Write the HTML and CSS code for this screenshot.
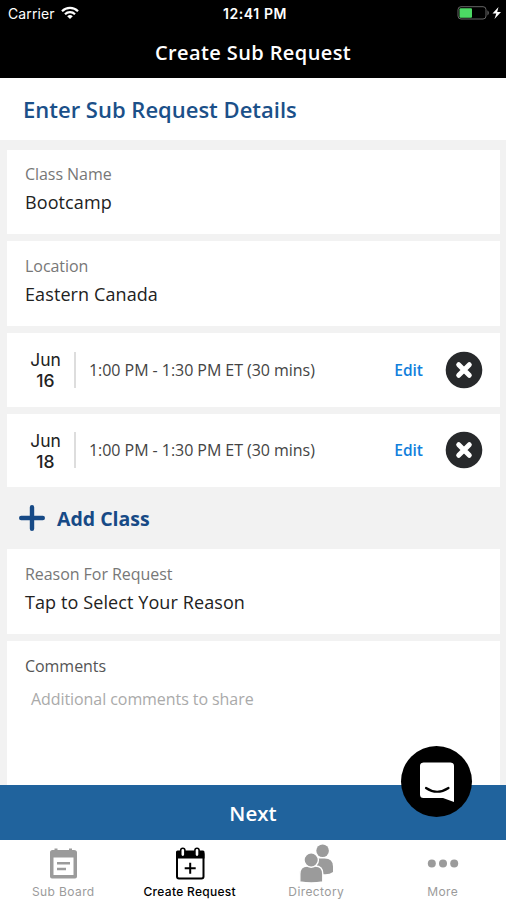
FILE: index.html
```html
<!DOCTYPE html>
<html lang="en">
<head>
    <meta charset="UTF-8">
    <meta name="viewport" content="width=device-width, initial-scale=1.0">
    <title>Create Sub Request</title>
    <link rel="stylesheet" href="styles.css">
</head>
<body>
    <header class="header">
        <div class="status-bar">
            <div class="carrier">
                <span>Carrier</span>
                <svg width="18" height="14" viewBox="0 0 18 14" fill="none" stroke="#fff" stroke-width="2.2">
                    <path d="M1 5.200a11.300 11.300 0 0 1 16 0"/>
                    <path d="M4 8.300a7 7 0 0 1 10 0"/>
                    <path d="M9 13L6.200 10.300a4 4 0 0 1 5.600 0z" fill="#fff" stroke="none"/>
                </svg>
            </div>
            <div class="clock">12:41 PM</div>
            <div class="battery">
                <svg width="46" height="16" viewBox="0 0 46 16">
                    <rect x="2" y="1.700" width="28" height="12.300" rx="3" fill="none" stroke="#666"/>
                    <rect x="3.500" y="3.200" width="12.500" height="9.500" rx="1" fill="#4cd964"/>
                    <path d="M31.500 5.200q2.500 2.700 0 5.400z" fill="#777"/>
                    <path d="M42.500 2L36.500 8.500h3.800L38.500 14 45 7h-3.800z" fill="#fff"/>
                </svg>
            </div>
        </div>
        <h1>Create Sub Request</h1>
    </header>

    <h2 class="page-title">Enter Sub Request Details</h2>

    <main class="form">
        <div class="card first">
            <div class="label">Class Name</div>
            <div class="value">Bootcamp</div>
        </div>
        <div class="card">
            <div class="label">Location</div>
            <div class="value">Eastern Canada</div>
        </div>
        <div class="card session">
            <div class="date">Jun<br><b>16</b></div>
            <div class="time">1:00 PM - 1:30 PM ET (30 mins)</div>
            <a class="edit">Edit</a>
            <svg class="remove" width="38" height="38" viewBox="0 0 38 38">
                <circle cx="19" cy="19" r="18.300" fill="#27292b"/>
                <path d="M13.700 13.700l10.600 10.600M24.300 13.700l-10.600 10.600" stroke="#fff" stroke-width="5" stroke-linecap="round"/>
            </svg>
        </div>
        <div class="card session">
            <div class="date">Jun<br><b>18</b></div>
            <div class="time">1:00 PM - 1:30 PM ET (30 mins)</div>
            <a class="edit">Edit</a>
            <svg class="remove" width="38" height="38" viewBox="0 0 38 38">
                <circle cx="19" cy="19" r="18.300" fill="#27292b"/>
                <path d="M13.700 13.700l10.600 10.600M24.300 13.700l-10.600 10.600" stroke="#fff" stroke-width="5" stroke-linecap="round"/>
            </svg>
        </div>
        <div class="add-class">
            <svg width="26" height="26" viewBox="0 0 26 26" stroke="#174a86" stroke-width="4.400" stroke-linecap="round">
                <path d="M13 2.200v21.600M2.200 13h21.600"/>
            </svg>
            <span>Add Class</span>
        </div>
        <div class="card">
            <div class="label">Reason For Request</div>
            <div class="value">Tap to Select Your Reason</div>
        </div>
        <div class="card comments">
            <div class="label dark">Comments</div>
            <div class="placeholder">Additional comments to share</div>
        </div>
    </main>

    <div class="next">
        <span>Next</span>
        <div class="chat">
            <svg width="36" height="42" viewBox="0 0 36 42">
                <path d="M4.500 1.500h27q3.500 0 3.500 3.500V41l-11-4H4.500Q1 37 1 33.500V5Q1 1.500 4.500 1.500z" fill="#fff"/>
                <path d="M7 27q11 7.500 22.500 0" fill="none" stroke="#000" stroke-width="2.200" stroke-linecap="round"/>
            </svg>
        </div>
    </div>

    <nav class="tabs">
        <div class="tab">
            <svg width="36" height="40" viewBox="0 0 36 40">
                <path d="M5 9.500q0-2.500 2.500-2.500H9.500V5.500h3V7h11.500V5.500h3V7h2Q32 7 32 9.500V33.500q0 2-2 2H7q-2 0-2-2z" fill="#9b9b9b"/>
                <path d="M8.500 14.500h20v17.500h-20z" fill="#fff"/>
                <path d="M12 20.300h13M12 26h9" stroke="#9b9b9b" stroke-width="2.400"/>
            </svg>
            <span>Sub Board</span>
        </div>
        <div class="tab active">
            <svg width="36" height="40" viewBox="0 0 36 40">
                <rect x="5" y="9.500" width="26.500" height="26" rx="2" fill="#fff" stroke="#000" stroke-width="2"/>
                <path d="M4 9q0-1.500 1.500-1.500H31Q32.500 7.500 32.500 9v6.500H4z" fill="#000"/>
                <rect x="8.700" y="5.200" width="4.200" height="8.500" rx="2.100" fill="#fff" stroke="#000" stroke-width="1.600"/>
                <rect x="22.900" y="5.200" width="4.200" height="8.500" rx="2.100" fill="#fff" stroke="#000" stroke-width="1.600"/>
                <path d="M18.200 19.700v11M12.700 25.200h11" stroke="#000" stroke-width="2"/>
            </svg>
            <span>Create Request</span>
        </div>
        <div class="tab">
            <svg width="36" height="40" viewBox="0 0 36 40" fill="#9b9b9b">
                <circle cx="24.600" cy="7.700" r="6.300"/>
                <path d="M19 30V15.500h7.500q8.500 0 8.500 8V29q-4 3-11 2z"/>
                <g stroke="#fff" stroke-width="1.400">
                    <path d="M1.800 39V31q0-8 7.500-8h8q7.500 0 7.500 8v8q-11.500 1.800-23 0z"/>
                    <circle cx="13.200" cy="17" r="7.200"/>
                </g>
            </svg>
            <span>Directory</span>
        </div>
        <div class="tab">
            <svg width="36" height="40" viewBox="0 0 36 40" fill="#9b9b9b">
                <circle cx="6.800" cy="20.500" r="4"/>
                <circle cx="18" cy="20.500" r="4"/>
                <circle cx="29.200" cy="20.500" r="4"/>
            </svg>
            <span>More</span>
        </div>
    </nav>
</body>
</html>
```
FILE: styles.css
```css
* {
    box-sizing: border-box;
}
body {
    font-family: "Open Sans", sans-serif;
    margin: 0;
    height: 900px;
    display: flex;
    flex-direction: column;
    overflow: hidden;
    background-color: #f2f2f2;
}
.header {
    height: 78px;
    background: #000;
    color: #fff;
}
.status-bar {
    display: grid;
    grid-template-columns: 1fr auto 1fr;
    height: 26px;
    padding: 0 4px 0 8px;
    align-items: center;
    font-family: Inter, sans-serif;
}
.carrier {
    display: flex;
    align-items: center;
    gap: 6px;
    font-size: 14px;
    letter-spacing: 0.1px;
}
.clock {
    font-weight: 600;
    font-size: 14px;
    letter-spacing: 0.6px;
}
.battery {
    display: flex;
    justify-content: flex-end;
}
h1 {
    margin: 0;
    text-align: center;
    font-size: 20px;
    font-weight: 600;
    line-height: 53px;
    letter-spacing: 0.4px;
}
.page-title {
    margin: 0;
    height: 62px;
    padding-left: 23px;
    background: #fff;
    color: #1b5089;
    font-size: 22px;
    font-weight: 600;
    line-height: 62px;
}
.form {
    flex: 1;
    display: flex;
    flex-direction: column;
    gap: 7px;
    padding: 10px 6px 0 7px;
}
.card {
    height: 85px;
    padding: 13px 18px;
    background: #fff;
}
.card.first {
    height: 84px;
    padding-top: 12px;
}
.label {
    font-size: 16px;
    line-height: 24px;
    letter-spacing: -0.05px;
    color: #777;
}
.label.dark {
    color: #555;
}
.value {
    font-size: 18px;
    line-height: 32px;
    letter-spacing: 0.1px;
    color: #222;
}
.card.session {
    display: flex;
    align-items: center;
    height: 73.5px;
    padding: 0 17px 0 18px;
}
.date {
    width: 51px;
    height: 36px;
    padding: 1px 8px 0 0;
    border-right: 2px solid #ddd;
    display: flex;
    flex-direction: column;
    justify-content: center;
    text-align: center;
    font-family: Inter, sans-serif;
    font-size: 17.5px;
    line-height: 21px;
    color: #222;
}
.date b {
    font-weight: 500;
}
.time {
    flex: 1;
    padding-left: 13px;
    font-size: 16px;
    letter-spacing: -0.05px;
    color: #444;
}
.edit {
    margin-right: 22px;
    color: #1180dc;
    font-size: 15.5px;
    font-weight: 600;
}
.add-class {
    display: flex;
    align-items: center;
    gap: 12px;
    height: 48px;
    padding-left: 12px;
    color: #174a86;
    font-size: 19.5px;
    font-weight: 700;
}
.comments {
    flex: 1;
}
.placeholder {
    padding: 9px 6px;
    font-size: 16px;
    line-height: 24px;
    letter-spacing: -0.07px;
    color: #aaa;
}
.next {
    position: relative;
    height: 55px;
    background: #20639d;
    color: #fff;
    text-align: center;
    font-size: 20.5px;
    font-weight: 600;
    line-height: 57px;
}
.chat {
    position: absolute;
    right: 34px;
    top: -39px;
    width: 71px;
    height: 71px;
    border-radius: 50%;
    background: #000;
    display: flex;
    align-items: center;
    justify-content: center;
}
.tabs {
    display: grid;
    grid-template-columns: repeat(4, 1fr);
    height: 60px;
    background: #fff;
}
.tab {
    display: flex;
    flex-direction: column;
    align-items: center;
    padding-top: 3px;
    color: #9b9b9b;
    font-family: Inter, sans-serif;
    font-size: 12px;
    line-height: 18px;
    letter-spacing: 0.4px;
}
.tab.active {
    color: #000;
    font-weight: 500;
    letter-spacing: 0.3px;
}
```
